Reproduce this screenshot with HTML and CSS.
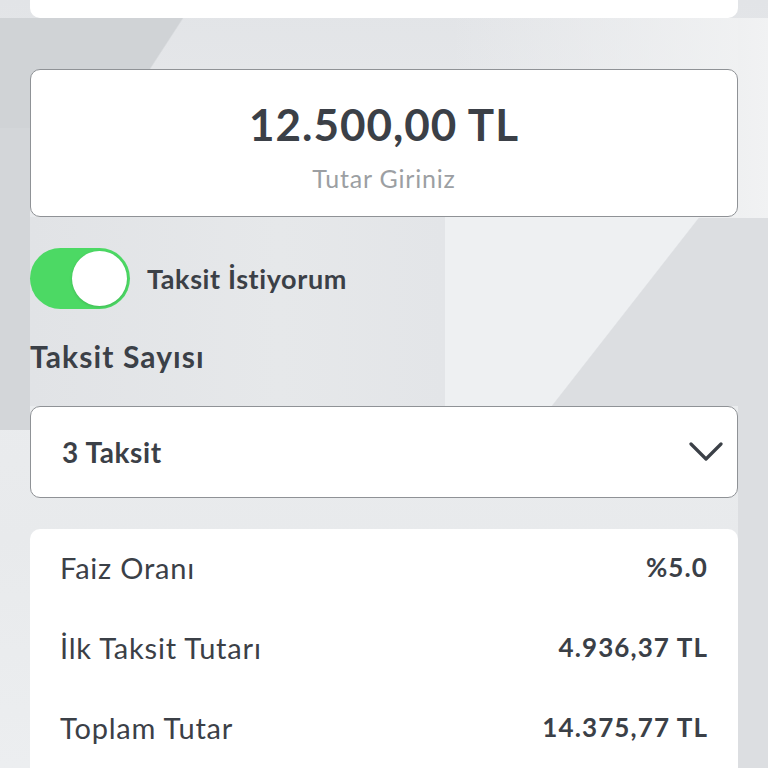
FILE: index.html
```html
<!DOCTYPE html>
<html lang="tr">
<head>
<meta charset="utf-8">
<link rel="stylesheet" href="styles.css">
</head>
<body>
<div class="page">
  <div class="top-card"></div>

  <div class="amount-card">
    <div class="amount">12.500,00 TL</div>
    <div class="hint">Tutar Giriniz</div>
  </div>

  <div class="toggle-row">
    <div class="toggle"><div class="knob"></div></div>
    <div class="toggle-label">Taksit İstiyorum</div>
  </div>

  <div class="section-title">Taksit Sayısı</div>

  <div class="select">
    <span class="select-value">3 Taksit</span>
    <svg class="chevron" width="34" height="22" viewBox="0 0 34 22"><path d="M2 3 L17 18 L32 3" fill="none" stroke="#3b4047" stroke-width="3.2" stroke-linecap="round" stroke-linejoin="round"/></svg>
  </div>

  <div class="info-card">
    <div class="info-row"><span class="label">Faiz Oranı</span><span class="value">%5.0</span></div>
    <div class="info-row"><span class="label">İlk Taksit Tutarı</span><span class="value">4.936,37 TL</span></div>
    <div class="info-row"><span class="label">Toplam Tutar</span><span class="value">14.375,77 TL</span></div>
  </div>
</div>
</body>
</html>
```

FILE: styles.css
```css
html, body {
  margin: 0;
  height: 100%;
  overflow: hidden;
}
body {
  font-family: "Lato", "Open Sans", sans-serif;
  color: #3b4047;
  background-color: #e6e8ea;
  background-repeat: no-repeat;
  background-image:
    linear-gradient(123deg, #d0d3d6 0 55%, transparent 55.5%),
    linear-gradient(90deg, #d3d6d9 0 100%),
    linear-gradient(90deg, transparent 0, #f1f2f3 100%),
    linear-gradient(128deg, #eef0f2 0 53.9%, #dcdee1 54.2%),
    linear-gradient(90deg, #dcdee1 0 100%),
    linear-gradient(90deg, #e1e3e6 0, #e6e8ea 60%, #e3e5e8 100%),
    linear-gradient(180deg, #e2e4e7 0, #ebedef 40%, #e8eaec 70%, #eceef0 100%);
  background-size:
    260px 110px,
    30px 320px,
    320px 200px,
    323px 189px,
    30px 750px,
    415px 189px,
    100% 100%;
  background-position:
    0 18px,
    0 110px,
    450px 18px,
    445px 217px,
    738px 18px,
    30px 217px,
    0 0;
}
.page {
  padding: 0 30px;
  display: flex;
  flex-direction: column;
}
.top-card {
  height: 18px;
  background: #ffffff;
  border-radius: 0 0 10px 10px;
}
.amount-card {
  margin-top: 51px;
  height: 148px;
  box-sizing: border-box;
  border: 1.5px solid #8f9296;
  border-radius: 10px;
  background: #ffffff;
  display: flex;
  flex-direction: column;
  align-items: center;
}
.amount {
  margin-top: 26px;
  font-size: 44px;
  font-weight: 700;
  line-height: 56px;
  letter-spacing: 1px;
}
.hint {
  margin-top: 10px;
  font-size: 25px;
  color: #9c9fa3;
  line-height: 32px;
  letter-spacing: 0.8px;
}
.toggle-row {
  margin-top: 31px;
  display: flex;
  align-items: center;
  gap: 17px;
}
.toggle {
  width: 100px;
  height: 61px;
  border-radius: 31px;
  background: #4cd964;
  display: flex;
  align-items: center;
  justify-content: flex-end;
  padding: 0 3px;
  box-sizing: border-box;
}
.knob {
  width: 55px;
  height: 55px;
  border-radius: 50%;
  background: #ffffff;
  box-shadow: 0 1px 3px rgba(0,0,0,0.15);
}
.toggle-label {
  font-size: 27px;
  font-weight: 700;
  letter-spacing: 0.6px;
}
.section-title {
  margin-top: 22px;
  font-size: 30px;
  font-weight: 700;
  line-height: 50px;
  letter-spacing: 1.1px;
}
.select {
  margin-top: 25px;
  height: 92px;
  box-sizing: border-box;
  border: 1.5px solid #8f9296;
  border-radius: 10px;
  background: #ffffff;
  display: flex;
  align-items: center;
  justify-content: space-between;
  padding: 0 14px 0 31px;
}
.select-value {
  font-size: 28px;
  font-weight: 700;
  letter-spacing: 0.6px;
}
.info-card {
  margin-top: 31px;
  background: #ffffff;
  border-radius: 10px;
  padding: 0 30px;
  height: 260px;
}
.info-row {
  height: 80px;
  padding-bottom: 4px;
  box-sizing: border-box;
  display: flex;
  align-items: center;
  justify-content: space-between;
}
.info-row + .info-row {
  height: 80px;
}
.label {
  font-size: 29px;
  letter-spacing: 0.8px;
}
.value {
  font-size: 26px;
  font-weight: 700;
  letter-spacing: 1.1px;
}
```
